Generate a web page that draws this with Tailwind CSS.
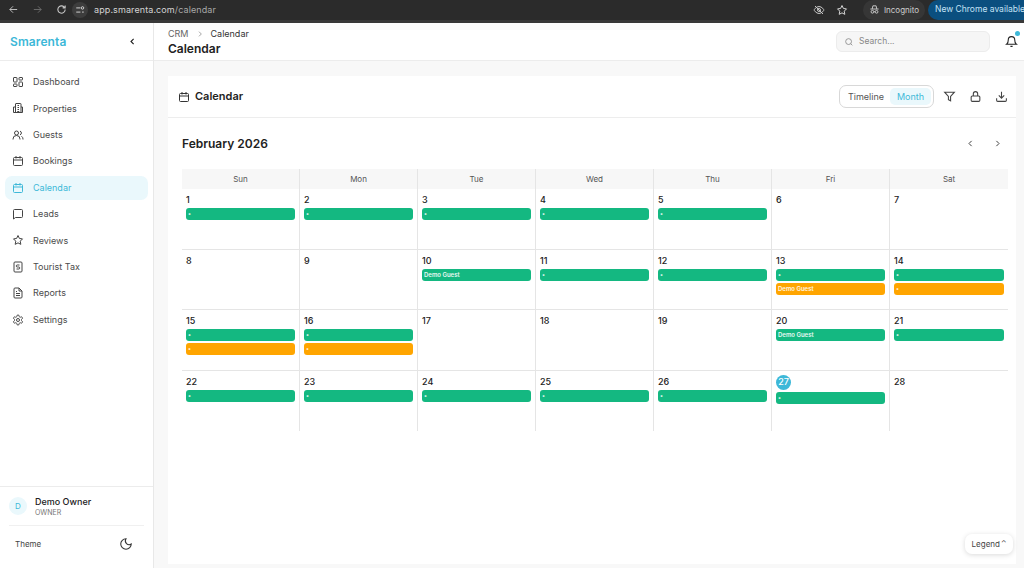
<!DOCTYPE html>
<html lang="en">
<head>
  <meta charset="UTF-8" />
  <title>Calendar</title>
  <script src="https://cdn.jsdelivr.net/npm/@tailwindcss/browser@4"></script>
</head>
<body class="w-[1024px] h-[568px] overflow-hidden bg-white text-[#18181b] font-['Inter',sans-serif]">

  <!-- Browser bar -->
  <div class="h-[23px] bg-[#2b2b2b] border-b-[3px] border-[#3a3a3a] flex items-center text-[#c7c7c7] pb-[1px]">
    <div class="flex items-center gap-[13px] pl-[8px] w-[72px]">
      <svg class="w-[11px] h-[11px]" viewBox="0 0 24 24" fill="none" stroke="#c7c7c7" stroke-width="2"><path d="M20 12H4M11 5l-7 7 7 7"/></svg>
      <svg class="w-[11px] h-[11px]" viewBox="0 0 24 24" fill="none" stroke="#6f6f6f" stroke-width="2"><path d="M4 12h16M13 5l7 7-7 7"/></svg>
      <svg class="w-[11px] h-[11px]" viewBox="0 0 24 24" fill="none" stroke="#c7c7c7" stroke-width="2.4"><path d="M20 12a8 8 0 1 1-2.5-5.8L20 8.5M20 3v5.5h-5.5"/></svg>
    </div>
    <div class="w-[16px] h-[16px] rounded-full bg-[#3d3d3d] flex items-center justify-center">
      <svg class="w-[10px] h-[10px]" viewBox="0 0 24 24" fill="none" stroke="#d0d0d0" stroke-width="2.4"><path d="M3 7h10M3 17h10M17 17h4"/><circle cx="18" cy="7" r="3"/></svg>
    </div>
    <span class="ml-[6px] text-[9px] tracking-[0.1px] text-[#d4d4d4]">app.smarenta.com<span class="text-[#a8a8a8]">/calendar</span></span>
    <div class="ml-auto flex items-center">
      <svg class="w-[12px] h-[12px]" viewBox="0 0 24 24" fill="none" stroke="#c7c7c7" stroke-width="2"><path d="M2 12s4-7 10-7 10 7 10 7-4 7-10 7-10-7-10-7z"/><circle cx="12" cy="12" r="3"/><path d="M4 4l16 16"/></svg>
      <svg class="w-[12px] h-[12px] ml-[11px]" viewBox="0 0 24 24" fill="none" stroke="#d4d4d4" stroke-width="2"><path d="M12 3l2.8 5.9 6.2.9-4.5 4.5 1.1 6.4-5.6-3-5.6 3 1.1-6.4L3 9.8l6.2-.9z"/></svg>
      <div class="ml-[15px] h-[20px] w-[62px] rounded-full bg-[#363636] flex items-center justify-center gap-[4px] text-[8px] text-[#cfcfcf]">
        <svg class="w-[11px] h-[11px]" viewBox="0 0 24 24" fill="none" stroke="#cfcfcf" stroke-width="2"><path d="M3 11h18M7 11l1.5-7h7L17 11"/><circle cx="7.500" cy="17" r="3"/><circle cx="16.500" cy="17" r="3"/><path d="M10.500 17h3"/></svg>
        Incognito
      </div>
      <div class="ml-[3px] h-[20px] w-[96px] rounded-l-full bg-[#0b4f7f] flex items-center pl-[7px] text-[8.500px] text-[#c5e3f6] whitespace-nowrap overflow-hidden">New Chrome available <span class="ml-[3px] font-bold">⋮</span></div>
    </div>
  </div>

  <div class="flex h-[545px]">
    <!-- Sidebar -->
    <aside class="w-[154px] shrink-0 border-r border-[#e8e8e8] flex flex-col bg-white relative overflow-hidden">
      <div class="h-[38px] flex items-center justify-between pl-[10px] pr-[16px] border-b border-[#ececec] shrink-0">
        <span class="text-[12px] font-semibold text-[#3db8d8] tracking-[0.1px]">Smarenta</span>
        <svg class="w-[9px] h-[9px]" viewBox="0 0 24 24" fill="none" stroke="#222" stroke-width="3"><path d="M15 5l-7 7 7 7"/></svg>
      </div>
      <nav class="pt-[9px] px-[5px] text-[9px] text-[#4b4b4b] flex flex-col gap-[2.400px]">
        <a class="h-[24px] flex items-center gap-[9px] pl-[7px]">
          <svg class="w-[12px] h-[12px]" viewBox="0 0 24 24" fill="none" stroke="#444" stroke-width="2"><rect x="3" y="3" width="7" height="9" rx="1"/><rect x="14" y="3" width="7" height="5" rx="1"/><rect x="14" y="12" width="7" height="9" rx="1"/><rect x="3" y="16" width="7" height="5" rx="1"/></svg>
          Dashboard</a>
        <a class="h-[24px] flex items-center gap-[9px] pl-[7px]">
          <svg class="w-[12px] h-[12px]" viewBox="0 0 24 24" fill="none" stroke="#444" stroke-width="2"><path d="M7 21V4a1 1 0 0 1 1-1h9a1 1 0 0 1 1 1v17M7 10H3v11h18V10h-3M11 7h3M11 11h3M11 15h3M11 21v-2h3v2"/></svg>
          Properties</a>
        <a class="h-[24px] flex items-center gap-[9px] pl-[7px]">
          <svg class="w-[12px] h-[12px]" viewBox="0 0 24 24" fill="none" stroke="#444" stroke-width="2"><circle cx="9" cy="8" r="4"/><path d="M2 21v-1a7 7 0 0 1 14 0v1M16 4.200a4 4 0 0 1 0 7.600M19 14.500a7 7 0 0 1 3 5.500v1"/></svg>
          Guests</a>
        <a class="h-[24px] flex items-center gap-[9px] pl-[7px]">
          <svg class="w-[12px] h-[12px]" viewBox="0 0 24 24" fill="none" stroke="#444" stroke-width="2"><rect x="3" y="5" width="18" height="16" rx="2"/><path d="M3 10h18M8 2v5M16 2v5"/></svg>
          Bookings</a>
        <a class="h-[24px] flex items-center gap-[9px] pl-[7px] rounded-[7px] bg-[#eaf8fc] text-[#3db8d8]">
          <svg class="w-[12px] h-[12px]" viewBox="0 0 24 24" fill="none" stroke="#3db8d8" stroke-width="2"><rect x="3" y="5" width="18" height="16" rx="2"/><path d="M3 10h18M8 2v5M16 2v5"/></svg>
          Calendar</a>
        <a class="h-[24px] flex items-center gap-[9px] pl-[7px]">
          <svg class="w-[12px] h-[12px]" viewBox="0 0 24 24" fill="none" stroke="#444" stroke-width="2"><path d="M3 5a2 2 0 0 1 2-2h14a2 2 0 0 1 2 2v12a2 2 0 0 1-2 2H7l-4 3z"/></svg>
          Leads</a>
        <a class="h-[24px] flex items-center gap-[9px] pl-[7px]">
          <svg class="w-[12px] h-[12px]" viewBox="0 0 24 24" fill="none" stroke="#444" stroke-width="2"><path d="M12 3l2.800 5.900 6.200.9-4.500 4.500 1.100 6.400-5.600-3-5.600 3 1.100-6.400L3 9.800l6.200-.9z"/></svg>
          Reviews</a>
        <a class="h-[24px] flex items-center gap-[9px] pl-[7px]">
          <svg class="w-[12px] h-[12px]" viewBox="0 0 24 24" fill="none" stroke="#444" stroke-width="2"><rect x="4" y="2" width="16" height="20" rx="2"/><path d="M15 8H10.500a1.800 1.800 0 0 0 0 4h3a1.800 1.800 0 0 1 0 4H9"/></svg>
          Tourist Tax</a>
        <a class="h-[24px] flex items-center gap-[9px] pl-[7px]">
          <svg class="w-[12px] h-[12px]" viewBox="0 0 24 24" fill="none" stroke="#444" stroke-width="2"><path d="M14 2H6a2 2 0 0 0-2 2v16a2 2 0 0 0 2 2h12a2 2 0 0 0 2-2V8z"/><path d="M14 2v6h6M8 13h8M8 17h8M8 9h2"/></svg>
          Reports</a>
        <a class="h-[24px] flex items-center gap-[9px] pl-[7px]">
          <svg class="w-[12px] h-[12px]" viewBox="0 0 24 24" fill="none" stroke="#444" stroke-width="2"><circle cx="12" cy="12" r="3"/><path d="M12.200 2h-.4a2 2 0 0 0-2 2v.2a2 2 0 0 1-1 1.700l-.4.300a2 2 0 0 1-2 0l-.2-.1a2 2 0 0 0-2.700.7l-.2.400a2 2 0 0 0 .7 2.700l.2.100a2 2 0 0 1 1 1.700v.6a2 2 0 0 1-1 1.700l-.2.100a2 2 0 0 0-.7 2.700l.2.400a2 2 0 0 0 2.700.7l.2-.1a2 2 0 0 1 2 0l.4.300a2 2 0 0 1 1 1.700v.2a2 2 0 0 0 2 2h.4a2 2 0 0 0 2-2v-.2a2 2 0 0 1 1-1.700l.4-.3a2 2 0 0 1 2 0l.2.100a2 2 0 0 0 2.700-.7l.2-.4a2 2 0 0 0-.7-2.700l-.2-.1a2 2 0 0 1-1-1.700v-.6a2 2 0 0 1 1-1.700l.2-.1a2 2 0 0 0 .7-2.700l-.2-.4a2 2 0 0 0-2.700-.7l-.2.100a2 2 0 0 1-2 0l-.4-.3a2 2 0 0 1-1-1.700V4a2 2 0 0 0-2-2z"/></svg>
          Settings</a>
      </nav>
      <div class="mt-auto border-t border-[#ececec] h-[82px] shrink-0 relative overflow-hidden">
        <div class="mx-[9px] h-[39px] flex items-center gap-[8px] border-b border-[#f0f0f0]">
          <div class="w-[18px] h-[18px] rounded-full bg-[#eaf8fc] text-[#3db8d8] text-[8px] flex items-center justify-center">D</div>
          <div class="leading-none">
            <div class="text-[9px] font-medium text-[#222]">Demo Owner</div>
            <div class="text-[7px] text-[#777] mt-[3px]">OWNER</div>
          </div>
        </div>
        <div class="h-[36px] flex items-center justify-between pl-[15px] pr-[20px] text-[8px] text-[#444]">
          Theme
          <svg class="w-[14px] h-[14px]" viewBox="0 0 24 24" fill="none" stroke="#333" stroke-width="1.800"><path d="M12 3a6.500 6.500 0 0 0 9 9 9 9 0 1 1-9-9z"/></svg>
        </div>
      </div>
    </aside>

    <!-- Main -->
    <main class="flex-1 flex flex-col bg-[#f8f8f8] min-w-0">
      <header class="h-[38px] shrink-0 bg-white border-b border-[#ececec] flex items-center justify-between pl-[14px] pr-[7px]">
        <div>
          <div class="text-[9px] leading-[12px] flex items-center text-[#666]">CRM
            <svg class="w-[8px] h-[8px] mx-[7px]" viewBox="0 0 24 24" fill="none" stroke="#777" stroke-width="2"><path d="M9 5l7 7-7 7"/></svg>
            <span class="text-[#333]">Calendar</span></div>
          <div class="text-[12px] leading-[15px] mt-[1px] font-semibold text-[#222]">Calendar</div>
        </div>
        <div class="flex items-center">
          <div class="w-[154px] h-[21px] rounded-[6px] bg-[#f6f6f6] border border-[#ececec] flex items-center pl-[7px] gap-[5px] text-[8.500px] text-[#888]">
            <svg class="w-[10px] h-[10px]" viewBox="0 0 24 24" fill="none" stroke="#888" stroke-width="2"><circle cx="11" cy="11" r="7"/><path d="M20 20l-4-4"/></svg>
            Search...
          </div>
          <div class="relative ml-[15px] w-[12px] h-[14px]">
            <svg class="w-[13px] h-[13px]" viewBox="0 0 24 24" fill="none" stroke="#222" stroke-width="2"><path d="M6 9a6 6 0 0 1 12 0c0 6 3 8 3 8H3s3-2 3-8M10 21h4"/></svg>
            <span class="absolute -top-[4px] -right-[3px] w-[5px] h-[5px] rounded-full bg-[#3db8d8]"></span>
          </div>
        </div>
      </header>

      <div class="flex-1 pt-[15px] pl-[14px] pr-[8px] pb-[4px] min-h-0">
        <section class="h-full bg-white relative flex flex-col">
          <div class="h-[42px] shrink-0 border-b border-[#ededed] flex items-center justify-between pl-[10px] pr-[8px]">
            <div class="flex items-center gap-[5px]">
              <svg class="w-[12px] h-[12px]" viewBox="0 0 24 24" fill="none" stroke="#333" stroke-width="2"><rect x="3" y="5" width="18" height="16" rx="2"/><path d="M3 10h18M8 2v5M16 2v5"/></svg>
              <span class="text-[11px] font-semibold text-[#222]">Calendar</span>
            </div>
            <div class="flex items-center">
              <div class="w-[95px] h-[23px] rounded-[7px] border border-[#d8d8d8] flex items-center p-[2px] text-[9px]">
                <span class="flex-1 text-center text-[#555]">Timeline</span>
                <span class="w-[41px] h-[17px] rounded-[5px] bg-[#eaf8fc] text-[#3db8d8] flex items-center justify-center">Month</span>
              </div>
              <svg class="w-[13px] h-[13px] ml-[9px]" viewBox="0 0 24 24" fill="none" stroke="#444" stroke-width="2"><path d="M3 4h18l-7 8v8l-4-2v-6z"/></svg>
              <svg class="w-[13px] h-[13px] ml-[13px]" viewBox="0 0 24 24" fill="none" stroke="#444" stroke-width="2"><rect x="4" y="11" width="16" height="10" rx="2"/><path d="M8 11V7a4 4 0 0 1 8 0v4"/></svg>
              <svg class="w-[13px] h-[13px] ml-[13px]" viewBox="0 0 24 24" fill="none" stroke="#444" stroke-width="2"><path d="M21 15v4a2 2 0 0 1-2 2H5a2 2 0 0 1-2-2v-4M7 10l5 5 5-5M12 15V3"/></svg>
            </div>
          </div>

          <div class="pl-[14px] pr-[8px]">
            <div class="h-[51px] flex items-center justify-between pr-[6px]">
              <h2 class="text-[12px] font-semibold text-[#222]">February 2026</h2>
              <div class="flex items-center gap-[18px]">
                <svg class="w-[9px] h-[9px]" viewBox="0 0 24 24" fill="none" stroke="#333" stroke-width="2.500"><path d="M15 5l-7 7 7 7"/></svg>
                <svg class="w-[9px] h-[9px]" viewBox="0 0 24 24" fill="none" stroke="#333" stroke-width="2.500"><path d="M9 5l7 7-7 7"/></svg>
              </div>
            </div>
            <div id="cal" class="grid grid-cols-[repeat(7,118px)]"></div>
          </div>

          <div class="absolute right-[3px] bottom-[10px] w-[48px] h-[20px] rounded-[7px] bg-white shadow-[0_1px_5px_rgba(0,0,0,0.15)] flex items-center justify-center text-[8px] text-[#444]">Legend<span class="ml-[1px] text-[7px]">⌃</span></div>
        </section>
      </div>
    </main>
  </div>

  <script>
    const days = ["Sun", "Mon", "Tue", "Wed", "Thu", "Fri", "Sat"];
    // g = green bar, o = orange bar, capitals carry the guest name
    const events = {
      1: "g", 2: "g", 3: "g", 4: "g", 5: "g",
      10: "G", 11: "g", 12: "g", 13: "gO", 14: "go",
      15: "go", 16: "go", 20: "G", 21: "g",
      22: "g", 23: "g", 24: "g", 25: "g", 26: "g", 27: "g"
    };
    const cal = document.getElementById("cal");
    let html = days.map((d, i) =>
      `<div class="h-[20px] bg-[#f7f7f7] flex items-center justify-center text-[8px] text-[#555] ${i < 6 ? "border-r border-[#e5e5e5]" : ""}">${d}</div>`
    ).join("");
    for (let n = 1; n <= 28; n++) {
      const col = (n - 1) % 7;
      const row = Math.floor((n - 1) / 7);
      const bars = (events[n] || "").split("").map(c => {
        const color = c.toLowerCase() === "g" ? "bg-[#14b881]" : "bg-[#ffa500]";
        const label = c === "G" || c === "O" ? "Demo Guest" : "•";
        return `<div class="${color} h-[12px] rounded-[3px] mb-[2px] px-[2px] flex items-center text-[6px] font-semibold text-white/90 leading-none">${label}</div>`;
      }).join("");
      const num = n === 27
        ? `<div class="w-[15px] h-[15px] rounded-full bg-[#3db8d8] text-white flex items-center justify-center text-[9px] font-medium mb-[2px]">27</div>`
        : `<div class="h-[14px] leading-[14px] text-[9px] font-medium text-[#222] mb-[0px]">${n}</div>`;
      cal.insertAdjacentHTML("beforeend", "");
      html += `<div class="h-[60.500px] px-[4px] pt-[4px] ${col < 6 ? "border-r border-[#e5e5e5]" : ""} ${row < 3 ? "border-b border-[#e5e5e5]" : ""}">${num}<div class="mt-[1px]">${bars}</div></div>`;
    }
    cal.innerHTML = html;
  </script>
</body>
</html>
